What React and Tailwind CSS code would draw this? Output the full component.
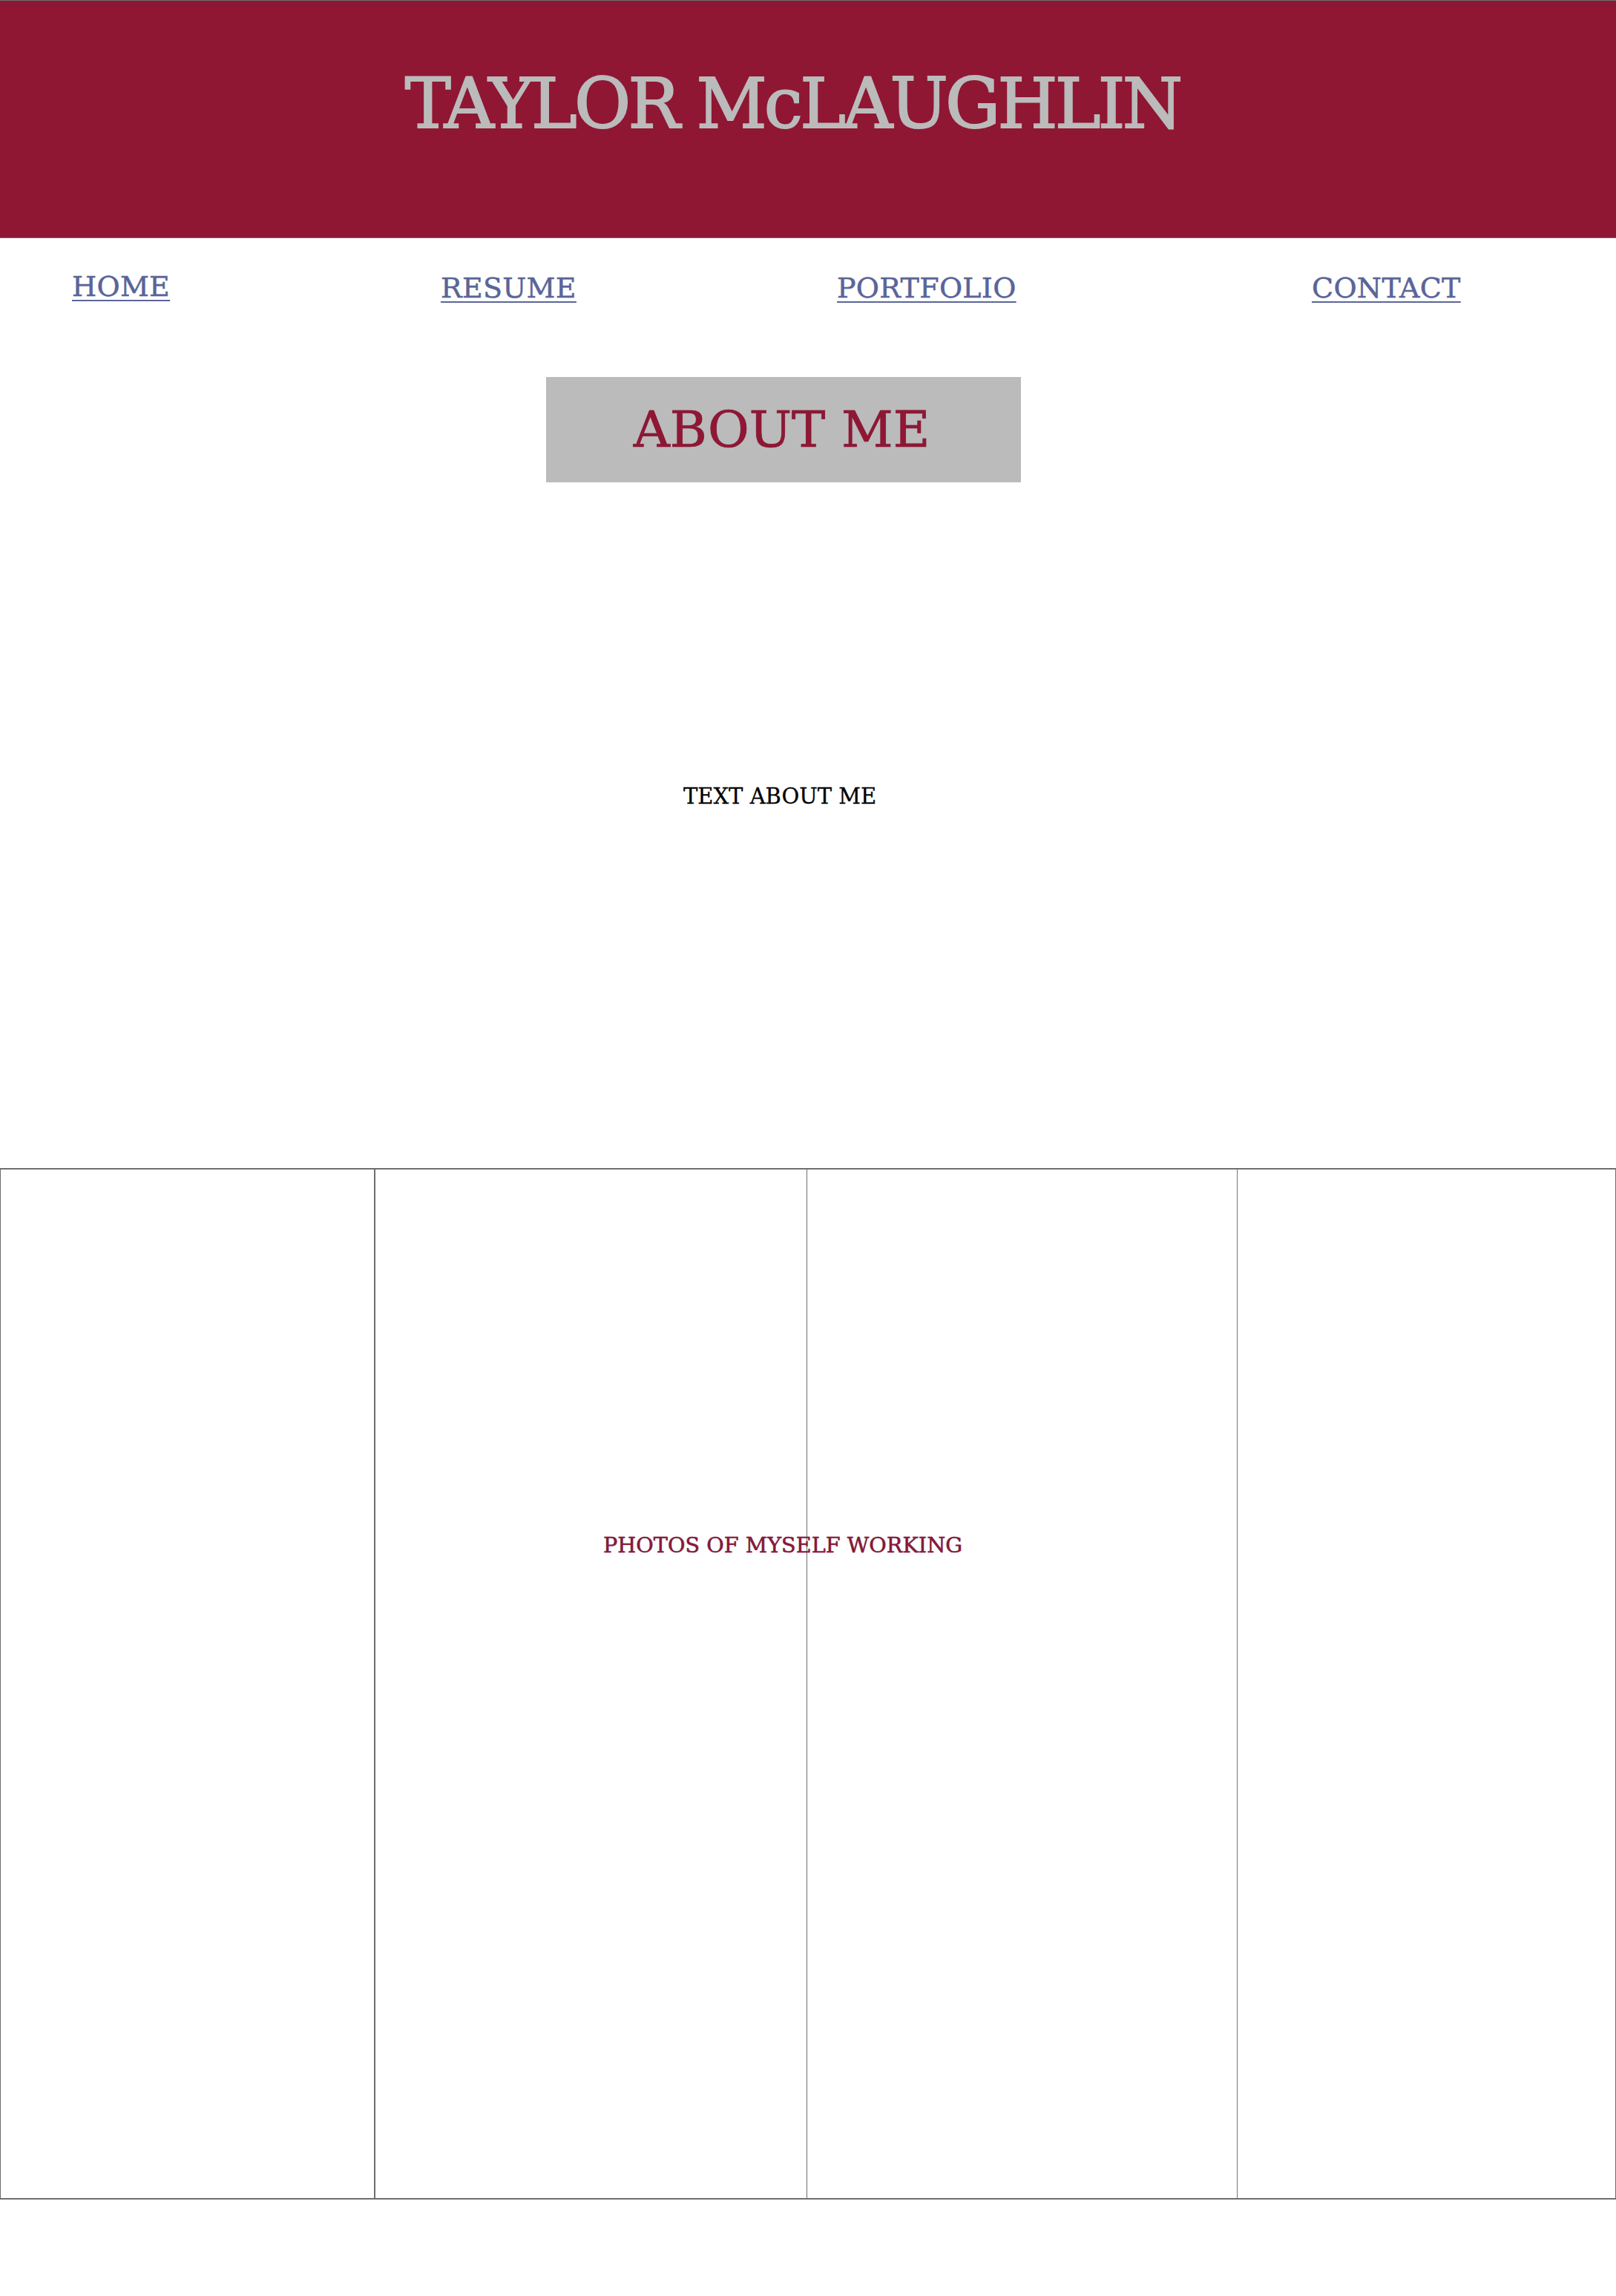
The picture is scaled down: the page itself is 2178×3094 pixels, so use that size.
export default function App() {
  const serif = "font-['DejaVu_Serif','Liberation_Serif',serif]";
  return (
    <div className={`w-[2178px] h-[3094px] bg-white ${serif}`}>
      {/* Header */}
      <header className="h-[321px] bg-[#8f1733] border-t border-b border-[#6e6e6e] pt-[85px] pr-[42px] text-center">
        <h1 className="text-[93px] leading-[108px] tracking-[-3.8px] text-[#bbbbbb] font-normal [-webkit-text-stroke:2px_#bbbbbb]">
          TAYLOR McLAUGHLIN
        </h1>
      </header>

      {/* Nav */}
      <nav className="grid grid-cols-[497px_534px_640px_auto] pl-[97px] pt-[43px] text-[38px] leading-[44px] tracking-[0.3px] text-[#5a6598] [-webkit-text-stroke:0.5px_#5a6598]">
        <a href="#" className="underline decoration-2 underline-offset-[5px] justify-self-start">HOME</a>
        <a href="#" className="underline decoration-2 underline-offset-[5px] justify-self-start mt-[2px]">RESUME</a>
        <a href="#" className="underline decoration-2 underline-offset-[5px] justify-self-start mt-[2px]">PORTFOLIO</a>
        <a href="#" className="underline decoration-2 underline-offset-[5px] justify-self-start mt-[2px]">CONTACT</a>
      </nav>

      {/* About me heading */}
      <div className="mt-[98px] ml-[736px] w-[640px] h-[142px] bg-[#bbbbbb] flex items-center justify-center">
        <h2 className="text-[68px] leading-none text-[#8f1733] [-webkit-text-stroke:0.7px_#8f1733] [text-shadow:0_0_1px_#5a6598] pr-[5px]">ABOUT ME</h2>
      </div>

      {/* Text about me */}
      <p className="mt-[406px] pr-[76px] text-center text-[29px] leading-[34px] text-black [-webkit-text-stroke:0.3px_#000]">TEXT ABOUT ME</p>

      {/* Photos */}
      <section className="relative mt-[484px] h-[1390px] grid grid-cols-[506px_582px_580px_1fr] border-t-2 border-b-2 border-[#6e6e6e]">
        <div className="border-l border-r-2 border-[#6e6e6e]"></div>
        <div className="border-r border-[#6e6e6e]"></div>
        <div className="border-r border-[#777777]"></div>
        <div className="border-r border-[#6e6e6e]"></div>
        <p className="absolute left-[813px] top-[489px] text-[28.7px] leading-[34px] text-[#8f1733] [-webkit-text-stroke:0.3px_#8f1733] [text-shadow:0_0_1px_#5a6598] whitespace-nowrap">
          PHOTOS OF MYSELF WORKING
        </p>
      </section>
    </div>
  );
}
